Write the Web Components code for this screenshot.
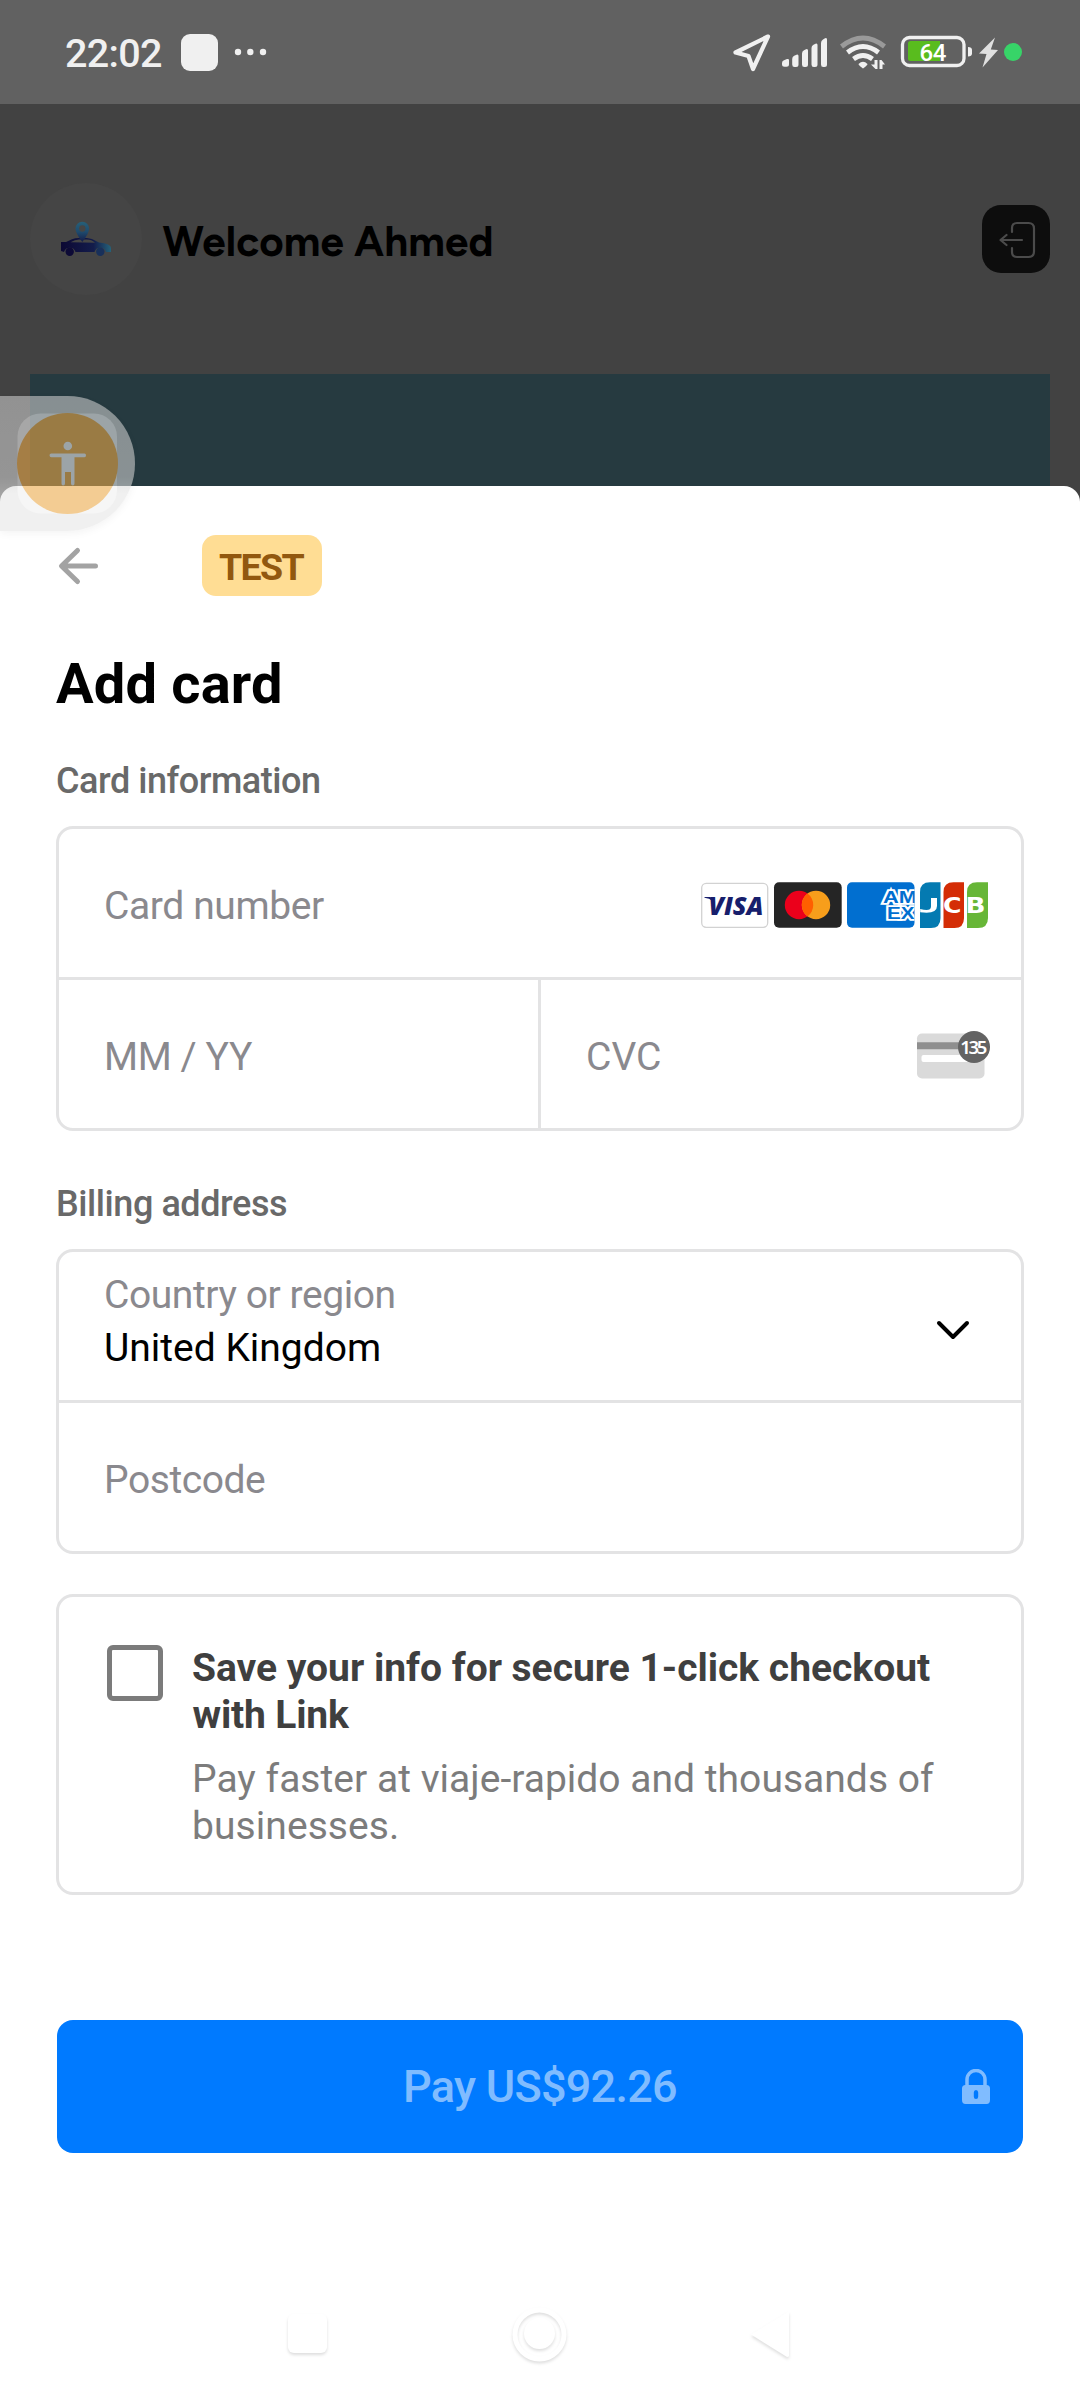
<!DOCTYPE html>
<html lang="en">
<head>
<meta charset="utf-8">
<title>Add card</title>
<style>
html,body{margin:0;padding:0}
body{width:1080px;height:2400px;overflow:hidden;background:#424242;font-family:Roboto,sans-serif}
</style>
</head>
<body>
<checkout-screen></checkout-screen>
<script>
const define=(name,html,ready)=>{
  const t=document.createElement('template');t.innerHTML=html;
  customElements.define(name,class extends HTMLElement{
    constructor(){super();this.attachShadow({mode:'open'}).append(t.content.cloneNode(true))}
    connectedCallback(){if(ready)ready(this)}
  });
};

/* One line of text whose glyphs start at the box edge and span the width "w". */
const pen=document.createElement('canvas').getContext('2d');
define('text-line',`<style>:host{display:block;white-space:pre}span{display:inline-block}</style><span><slot></slot></span>`,el=>{
  const s=getComputedStyle(el),text=el.textContent;
  pen.font=`${s.fontWeight} ${s.fontSize} ${s.fontFamily}`;
  const m=pen.measureText(text),ink=m.actualBoundingBoxLeft+m.actualBoundingBoxRight;
  const span=el.shadowRoot.querySelector('span');
  span.style.marginLeft=(m.actualBoundingBoxLeft+(+el.getAttribute('dx')||0))+'px';
  span.style.letterSpacing=((+el.getAttribute('w')-ink)/(text.length-1))+'px';
});

define('status-bar',`<style>
:host{display:flex;justify-content:space-between;height:104px;background:#616161;color:#f0f0f0}
.l{display:flex;padding-left:66px}
text-line{font:500 39.500px/104px Roboto,sans-serif;width:115px;padding-top:2px;height:102px}
svg{display:block}
</style>
<div class="l"><text-line w="95">22:02</text-line>
<svg width="100" height="104" viewBox="181 0 100 104" fill="#f0f0f0"><rect x="181" y="34" width="37" height="37" rx="9"/><circle cx="238" cy="52" r="3.2"/><circle cx="250.3" cy="52" r="3.2"/><circle cx="263" cy="52" r="3.2"/></svg></div>
<svg width="350" height="104" viewBox="730 0 350 104">
<path d="M768 36.5L735.5 52.5L748.5 56L753 69Z" fill="none" stroke="#f0f0f0" stroke-width="4.2" stroke-linejoin="round"/>
<g fill="#f0f0f0"><path d="M782 63q0-2 2-2.700l3-1.200q2-.7 2 1.200v4q0 2.500-2.500 2.500h-2q-2.500 0-2.500-2.500z"/>
<path d="M792.200 59q0-2.500 2-3.300l2.300-1q2-.8 2 1.300v8.500q0 2.500-2.500 2.500h-1.500q-2.300 0-2.300-2.500z"/>
<path d="M802 53.500q0-2.500 2-3.300l2-1q2-.8 2 1.300v14q0 2.500-2.500 2.500h-1.200q-2.300 0-2.300-2.500z"/>
<path d="M811.500 48q0-2.500 2-3.300l2-1q2-.8 2 1.300v19.500q0 2.500-2.500 2.500h-1.200q-2.300 0-2.300-2.500z"/>
<path d="M821 43q0-2.500 2-3.500l2-1.200q2-1 2 1.200v25q0 2.500-2.500 2.500h-1.200q-2.300 0-2.300-2.500z"/></g>
<g fill="none" stroke-width="4.800">
<path d="M841.500 46.500Q863 29.500 884.500 46.500" stroke="#9a9a9a"/>
<path d="M847.500 52.500Q863 40.500 878.500 52.500" stroke="#f0f0f0"/>
<path d="M853.500 59Q863 52 872.500 59" stroke="#f0f0f0"/></g>
<path d="M858.500 64q4.500-4.500 9 0q0 1-4.500 4.500q-4.500-3.500-4.500-4.500z" fill="#f0f0f0"/>
<path d="M874.500 60h3v9h-2l-4.500-4.500h3.500zM879.500 69v-9h2l3.500 4.500h-2.500v4.500z" fill="#f0f0f0"/>
<rect x="902.500" y="37.500" width="61.500" height="28" rx="7" fill="none" stroke="#f0f0f0" stroke-width="3.300"/>
<path d="M910.500 41H940V61H910.500Q908 61 908 58.500V43.500Q908 41 910.500 41Z" fill="#59bc1e"/>
<path d="M968 47q4 0 4 3v3.500q0 3-4 3z" fill="#f0f0f0"/>
<text x="919.500" y="61" font-family="Roboto" font-weight="500" font-size="24" textLength="27" fill="#fff">64</text>
<path d="M995 37.500L979 53.500L986.500 54L982.500 67.500L998 50L990.800 49.500Z" fill="#e0e0e0"/>
<circle cx="1013" cy="52" r="9" fill="#37d468"/></svg>`);

define('app-header',`<style>
:host{display:flex;align-items:center;height:112px;padding:0 30px;margin-top:79px}
.a{width:112px;height:112px;border-radius:50%;background:#454545}
text-line{margin-left:21px;flex:1;font:700 42px/50px Figtree,Inter,sans-serif;color:#000;padding-top:5px}
.b{width:68px;height:68px;border-radius:19px;background:#0d0d0d}
svg{display:block}
</style>
<div class="a"><svg width="112" height="112" viewBox="30 183 112 112">
<defs><linearGradient id="g" x1="0" x2="1"><stop offset="0" stop-color="#0c0833"/><stop offset=".65" stop-color="#131c4b"/><stop offset="1" stop-color="#25627a"/></linearGradient>
<linearGradient id="p" x1="0" x2="0" y1="0" y2="1"><stop offset="0" stop-color="#276078"/><stop offset=".5" stop-color="#1f4b6d"/><stop offset="1" stop-color="#151b49"/></linearGradient></defs>
<path d="M61 242H66L72 239.300Q75 238 79 238H87Q92 238 97 241.500L99 242.500Q111 243.500 111 248V252H106A6 6 0 0 0 94.500 252H75.500A6 6 0 0 0 64 252L61 251Z" fill="url(#g)"/>
<path d="M70.500 242.300Q75 239.500 79 239.500H87Q91.500 239.500 95 242.800Z" fill="#454545"/>
<path d="M82.300 242Q75.500 233.500 75.500 228.500a6.800 6.800 0 0 1 13.600 0Q89.100 233.500 82.300 242Z" fill="url(#p)"/><circle cx="82.300" cy="228.500" r="3.200" fill="#454545"/>
<circle cx="69.700" cy="251.700" r="4.200" fill="#0d0a36"/><circle cx="100.300" cy="251.700" r="4.200" fill="#18305a"/>
</svg></div>
<text-line w="329" dx="-.5">Welcome Ahmed</text-line>
<div class="b"><svg width="68" height="68" viewBox="982 205 68 68" fill="none" stroke="#4b4b4b" stroke-width="2.200" stroke-linecap="round" stroke-linejoin="round"><path d="M1012 232V228Q1012 223 1017 223H1028.500Q1034 223 1034 228.500V251.500Q1034 257 1028.500 257H1017Q1012 257 1012 252V248M1022 240H1001M1006.500 235L1000.500 240L1006.500 245"/></svg></div>`);

define('card-brands',`<style>:host{display:block}svg{display:block}</style>
<svg width="288" height="46" viewBox="701 882 288 46">
<defs><clipPath id="a"><rect x="847" y="882.300" width="67.500" height="45.500" rx="5"/></clipPath></defs>
<rect x="701.700" y="883.300" width="66" height="44" rx="4.500" fill="#fff" stroke="#d2d2d2" stroke-width="1.300"/>
<path d="M704.500 897H710.500L712.500 901Q709.500 898.300 704.500 897.800Z" fill="#171e6c"/>
<text x="708.500" y="915" textLength="55" lengthAdjust="spacingAndGlyphs" font-family="Open Sans" font-weight="800" font-style="italic" font-size="24.500" fill="#171e6c">VISA</text>
<rect x="774" y="882.300" width="67.700" height="45.500" rx="5" fill="#252525"/>
<circle cx="799" cy="905" r="14.200" fill="#eb001b"/><circle cx="816" cy="905" r="14.200" fill="#f79e1b"/><path d="M807.500 893.600A14.200 14.200 0 0 1 807.500 916.400A14.200 14.200 0 0 1 807.500 893.600" fill="#ff5f00"/>
<g clip-path="url(#a)"><rect x="847" y="882" width="68" height="46" fill="#016fd0"/>
<g font-family="Liberation Sans" font-weight="700" font-size="16" fill="#016fd0" stroke="#fff" stroke-width="3.600" paint-order="stroke" stroke-linejoin="miter"><text x="883" y="903" textLength="34" lengthAdjust="spacingAndGlyphs">AM</text><text x="887" y="918.800" textLength="27.500" lengthAdjust="spacingAndGlyphs">EX</text></g></g>
<path d="M920 928V892Q920 882.300 930 882.300H940.500V918Q940.500 928 931 928Z" fill="#047ab1"/>
<path d="M943.500 928V892Q943.500 882.300 953.500 882.300H964V918Q964 928 954.500 928Z" fill="#d42d06"/>
<path d="M967 928V892Q967 882.300 977 882.300H988V918Q988 928 978 928Z" fill="#67b637"/>
<g font-family="DejaVu Sans" font-weight="700" font-size="21" fill="#fff"><path d="M920.200 909V912.200Q937 914.500 937 906V898H931V906.500Q931 912 920.200 909Z"/><text x="943" y="912.800" textLength="18.500" lengthAdjust="spacingAndGlyphs">C</text><text x="965.500" y="912.800" textLength="20" lengthAdjust="spacingAndGlyphs">B</text></g>
</svg>`);

define('cvc-icon',`<style>:host{display:block}svg{display:block}</style>
<svg width="76" height="50" viewBox="915 1030 76 50"><rect x="917" y="1033.500" width="67.500" height="45" rx="5" fill="#dadada"/><path d="M917 1042.300h60v7h-60z" fill="#8f8f8f"/><rect x="921.500" y="1055" width="55" height="7" rx="2" fill="#fff"/><circle cx="974" cy="1047" r="16" fill="#636363"/><text x="960.300" y="1053.700" textLength="27" font-family="Noto Sans" font-weight="600" font-size="18.500" fill="#fff">135</text></svg>`);

define('field-box',`<style>:host{display:block;box-sizing:border-box;border:3px solid #e3e3e4;border-radius:17px;background:#fff}</style><slot></slot>`);

define('link-offer',`<style>
:host{display:block;margin-top:40px}
.r{display:flex;height:295px}
.c{box-sizing:border-box;width:56px;height:56px;border:5px solid #7b7b7b;border-radius:6px;margin:48px 29px 0 48px}
.t{font-size:39px;line-height:47px;padding-top:48px}
.h{font-weight:700;color:#3f3f3f}.s{color:#7c7c7c}.g{margin-top:17px}
</style><field-box><div class="r"><div class="c"></div><div class="t">
<text-line class="h" w="737" dx="1">Save your info for secure 1-click checkout</text-line>
<text-line class="h" w="157.500" dx=".5">with Link</text-line>
<text-line class="s g" w="739" dx="3">Pay faster at viaje-rapido and thousands of</text-line>
<text-line class="s" w="203" dx="2">businesses.</text-line></div></div></field-box>`);

define('pay-button',`<style>
:host{display:flex;align-items:center;height:133px;margin:125px 1px 0 .5px;background:#007aff;border-radius:16px;color:#80bcff}
text-line{font:500 45px/53px Roboto,sans-serif;margin-left:349px;flex:1}
svg{display:block;margin-right:33px}
</style><text-line w="270" dx=".5">Pay US$92.26</text-line>
<svg width="28" height="36" viewBox="0 0 28 36"><path d="M5 17V10.500a9 9 0 0 1 18 0V17" fill="none" stroke="#80bcff" stroke-width="3.500"/><path fill-rule="evenodd" fill="#80bcff" d="M3.500 16H24.500Q28 16 28 19.500V31Q28 35 24.500 35H3.500Q0 35 0 31V19.500Q0 16 3.500 16ZM14 21Q11.800 21 11.800 23.500V27.500Q11.800 30 14 30Q16.200 30 16.200 27.500V23.500Q16.200 21 14 21Z"/></svg>`);

define('nav-bar',`<style>:host{display:flex;justify-content:center;margin-top:147px}svg{display:block;filter:drop-shadow(0 2px 1.500px rgba(0,0,0,.13))}</style>
<svg width="600" height="80" viewBox="240 2300 600 80" fill="#fff"><rect x="288" y="2314" width="39" height="39" rx="6"/><path fill-rule="evenodd" d="M512.500 2334.500a27 27 0 1 0 54 0a27 27 0 1 0-54 0zM517.500 2334.500a22 22 0 1 1 44 0a22 22 0 1 1-44 0z"/><circle cx="539.500" cy="2333.500" r="15.500"/><path d="M751 2334.500L788 2312Q789 2312 789 2313V2355.500Q789 2357 787 2357Z"/></svg>`);

define('payment-sheet',`<style>
:host{display:block;box-sizing:border-box;height:1914px;background:#fff;border-radius:16px 16px 0 0;padding:49px 56px 0}
.top{display:flex;align-items:center;height:61px}
.tag{margin-left:103px;width:120px;height:61px;box-sizing:border-box;padding-left:17px;border-radius:14px;background:#ffdd94;color:#92580f;font:700 37.500px/64px Roboto,sans-serif}
h1{margin:55px 0 0;font:700 56px/66px Roboto,sans-serif;color:#000;height:66px}
h2{margin:0;padding-left:1px;font:500 36px/42px Roboto,sans-serif;color:#696969}
h2.one{margin-top:43px;margin-bottom:24px;height:42px}h2.two{margin-top:52px;height:43px;margin-bottom:23px}
.row{display:flex;align-items:center;box-sizing:border-box;height:148px;padding:4px 0 0 47px;color:#8a898e;font-size:39px}
.line{box-sizing:border-box;border-top:3px solid #e3e3e4;height:151px}
text-line{line-height:46px;flex:1;padding-top:1px}
.tag text-line{line-height:64px;padding:0}h1 text-line{line-height:66px;padding:0}h2 text-line{line-height:42px;padding:0}
.split{display:flex}.split>.row{flex:1}.row.cvc{width:483px;flex:none;border-left:3px solid #e3e3e4}
.v{color:#000}.stack{flex:1}.stack text-line{line-height:53px;padding:0}
svg{display:block}
</style>
<div class="top"><svg width="43" height="40" viewBox="0 0 43 40" fill="none" stroke="#a3a3a3" stroke-width="5" stroke-linecap="round" stroke-linejoin="round"><path d="M39.500 20H6M21.500 4.500L5.500 20L21.500 35.500"/></svg>
<div class="tag"><text-line w="85.500">TEST</text-line></div></div>
<h1><text-line w="224">Add card</text-line></h1>
<h2 class="one"><text-line w="262">Card information</text-line></h2>
<field-box>
<div class="row"><text-line w="218">Card number</text-line><card-brands style="margin-right:32px"></card-brands></div>
<div class="split line"><div class="row"><text-line w="146" dx="1">MM / YY</text-line></div>
<div class="row cvc"><text-line w="72">CVC</text-line><cvc-icon style="margin:-2px 30px 0 0"></cvc-icon></div></div>
</field-box>
<h2 class="two"><text-line w="228" dx="1">Billing address</text-line></h2>
<field-box>
<div class="row"><div class="stack"><text-line w="287.500" style="margin-top:-13px">Country or region</text-line><text-line class="v" w="273">United Kingdom</text-line></div>
<svg width="36" height="24" viewBox="0 0 36 24" style="margin:4px 50px 0 0" fill="none" stroke="#000" stroke-width="4" stroke-linecap="round" stroke-linejoin="round"><path d="M4 5L18 19L32 5"/></svg></div>
<div class="row line"><text-line w="158" dx="1">Postcode</text-line></div>
</field-box>
<link-offer></link-offer>
<pay-button></pay-button>
<nav-bar></nav-bar>`);

define('access-bubble',`<style>
:host{position:absolute;left:0;top:396px;width:135px;height:135px;opacity:.585;border-radius:0 68px 68px 0;background:linear-gradient(#cccccc,#d0d0d0 60%,#e6e6e6 72%);box-shadow:0 3px 9px rgba(0,0,0,.08)}
svg{display:block}</style>
<svg width="135" height="135" viewBox="0 396 135 135"><rect x="17.500" y="413.500" width="99.500" height="100" rx="23" fill="#f0f0f0"/><circle cx="67.500" cy="463.500" r="50.500" fill="#eca948"/><g fill="#f0f0f0"><circle cx="67.800" cy="446" r="4.300"/><path d="M51.500 453.500H84.500Q86 453.500 86 455.300T84.500 457.200H74.500V483.500Q74.500 485.500 72.800 485.500T71 483.500V472H65V483.500Q65 485.500 63.200 485.500T61.500 483.500V457.200H51.500Q49.500 457.200 49.500 455.300T51.500 453.500Z"/></g></svg>`);

define('checkout-screen',`<style>
:host{display:block;position:relative;width:1080px;height:2400px;background:#424242}
.banner{margin:79px 30px 0;height:112px;background:#263a40}
</style>
<status-bar></status-bar><app-header></app-header><div class="banner"></div>
<payment-sheet></payment-sheet><access-bubble></access-bubble>`);
</script>
</body>
</html>
